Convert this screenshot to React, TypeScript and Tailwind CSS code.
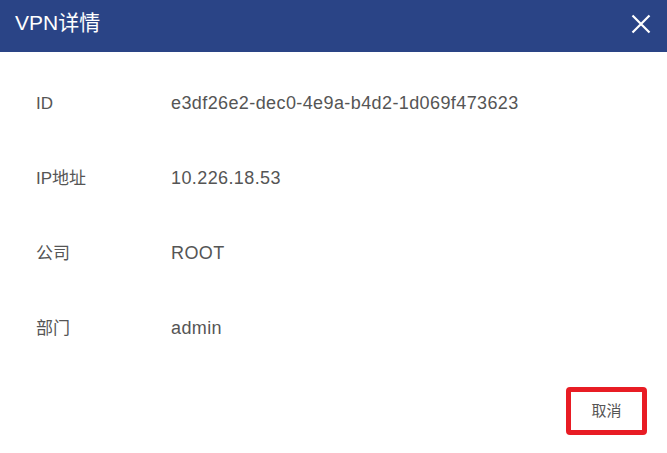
export default function App() {
  const rows = [
    { label: "ID", value: "e3df26e2-dec0-4e9a-b4d2-1d069f473623" },
    { label: "IP地址", value: "10.226.18.53" },
    { label: "公司", value: "ROOT" },
    { label: "部门", value: "admin" },
  ];

  return (
    <div
      className="w-[667px] h-[453px] bg-white flex flex-col"
      style={{ fontFamily: '"Liberation Sans", "Noto Sans CJK SC", sans-serif' }}
    >
      {/* Header */}
      <div className="h-[52px] shrink-0 bg-[#2a4486] flex items-center justify-between pl-[15px] pr-[15px] pb-[7px]">
        <span className="text-white text-[21px]">VPN详情</span>
        <svg width="20" height="20" viewBox="0 0 20 20" className="mr-[1px] mt-[3px]">
          <path d="M1.5 1.5L18.5 18.5M18.5 1.5L1.5 18.5" stroke="white" strokeWidth="2.2" />
        </svg>
      </div>

      {/* Body */}
      <div className="flex flex-col pt-[14px] pl-[36px]">
        {rows.map((r) => (
          <div key={r.label} className="flex items-center h-[75px]">
            <span className="w-[135px] text-[17px] text-[#555]">{r.label}</span>
            <span className="text-[18px] tracking-[0.4px] text-[#555]">{r.value}</span>
          </div>
        ))}
      </div>

      {/* Footer */}
      <div className="flex justify-end pr-[20px] mt-auto mb-[18px]">
        <button className="w-[81px] h-[48px] border-[5px] border-[#e81c24] rounded-[4px] text-[15px] text-[#555] bg-white">
          取消
        </button>
      </div>
    </div>
  );
}
